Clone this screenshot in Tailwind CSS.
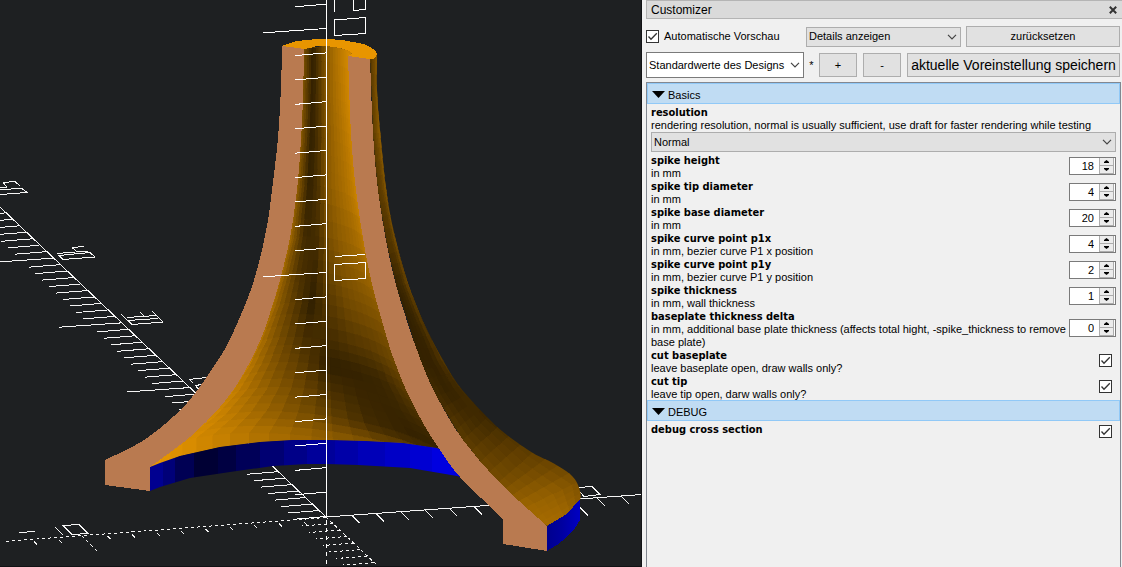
<!DOCTYPE html>
<html lang="de">

<head>
    <meta charset="UTF-8" />
    <meta name="viewport" content="width=device-width, initial-scale=1.0" />
    <title>Customizer</title>
    <script src="https://cdn.jsdelivr.net/npm/@tailwindcss/browser@4"></script>
</head>

<body class="flex h-screen overflow-hidden bg-[#f0f0f0] font-['Liberation_Sans',sans-serif] text-[11px] leading-[13px] text-black">
    <!-- shared icons -->
    <svg class="hidden">
        <symbol id="chevron" viewBox="0 0 10 6"><path d="M1 .8L5 4.8L9 .8" fill="none" stroke="#444" stroke-width="1.2" /></symbol>
        <symbol id="check" viewBox="0 0 13 13"><path d="M2.5 6.5L5 9.2L10.8 3.2" fill="none" stroke="#333" stroke-width="1.3" /></symbol>
        <symbol id="up" viewBox="0 0 5 3"><path d="M0 3V2L2.5 0L5 2V3Z" /></symbol>
        <symbol id="down" viewBox="0 0 5 3"><path d="M0 0V1L2.5 3L5 1V0Z" /></symbol>
        <symbol id="triangle" viewBox="0 0 13 7"><path d="M0 0H13L6.5 7Z" /></symbol>
    </svg>

    <main class="min-w-0 flex-1 bg-[#1e2022]">
        <svg class="block h-full w-full" viewBox="0 0 642 567" preserveAspectRatio="xMaxYMin slice" shape-rendering="crispEdges" role="img" aria-label="3D view">
            <defs>
                <clipPath id="inside">
                    <path d="M300 49L310 48L327 46L340 48L351 51L352 54L360 97L362 190L368 220L376 257L388 293L400 337L412 380L440 420L446 450L403 443L365 441L327 440L293 440L260 442L220 447L180 456L150 468L140 467L180 437L210 407L230 380L252 337L260 313L270 280L280 243L290 200L296 140L298 97Z" />
                </clipPath>
                <clipPath id="outside">
                    <path id="outside-shape" />
                </clipPath>
                <clipPath id="rim">
                    <path d="M150 467L160 463L180 456L220 447L260 442L293 440L327 440L365 441L403 443L437 448L445 452L464 478L457 476L410 468L358 465L327 464L307 464L273 466L230 472L190 478L160 487L150 491Z" />
                </clipPath>
                <linearGradient id="edge">
                    <stop offset="0" stop-color="#00008e" />
                    <stop offset=".45" stop-color="#0000a0" />
                    <stop offset="1" stop-color="#0000c4" />
                </linearGradient>
            </defs>
            <g id="axes" fill="none" stroke="#f4f4f4"></g>
            <g clip-path="url(#inside)">
                <path fill="#d08600" d="M140 40H460V500H140Z" />
                <g id="surface-in"></g>
            </g>
            <g id="surface-out" clip-path="url(#outside)"></g>
            <g id="surface-rim" clip-path="url(#rim)"></g>
            <path fill="url(#edge)" d="M547 526L567 514L580 499V520L575 528L567 537L557 545L547 551Z" />
            <path fill="#e89500" d="M282 46L290 43L297 41L312 39.500L327 39L342 40L353 42L364 44L370 47L375 50L377 54L376 57L373 59L368 59L348 56L352 54L350 51L340 48L327 46L317 46L310 48L304 49L290 47Z" />
            <path id="face-left" fill="#b97a50" />
            <path id="face-right" fill="#b97a50" />
            <g id="z-axis" fill="none" stroke="#fff"></g>
            <path fill="none" stroke="#111214" d="M0 566.500H642M641.500 0V567" />
        </svg>
    </main>

    <aside class="flex w-[480px] flex-none flex-col pl-1">
        <header class="flex h-[19px] flex-none items-center justify-between border border-r-0 border-[#b4b4b4] bg-[#dadada] pt-0.5 pr-[5px] pl-1 text-[12px]">
            <h1>Customizer</h1>
            <button aria-label="Schließen"><svg class="mb-0.5 size-2" viewBox="0 0 8 8"><path d="M.8 .8L7.200 7.200M7.200 .8L.8 7.200" stroke="#333" stroke-width="2" /></svg></button>
        </header>

        <div class="mt-[7px] flex h-[21px] flex-none items-center pr-0.5">
            <label class="flex w-40 flex-none items-center gap-[5px]">
                <span class="grid">
                    <input type="checkbox" checked class="col-start-1 row-start-1 size-[13px] appearance-none border border-[#333] bg-white" />
                    <svg class="pointer-events-none col-start-1 row-start-1 size-[13px]"><use href="#check" /></svg>
                </span>
                Automatische Vorschau
            </label>
            <span class="grid w-[155px] flex-none items-center">
                <select aria-label="Details" class="col-start-1 row-start-1 h-5 appearance-none border border-[#adadad] bg-[#e1e1e1] pl-0.5">
                    <option>Details anzeigen</option>
                </select>
                <svg class="pointer-events-none col-start-1 row-start-1 mr-1 h-1.5 w-2.5 justify-self-end"><use href="#chevron" /></svg>
            </span>
            <button class="ml-[5px] h-[21px] flex-1 border border-[#adadad] bg-[#e1e1e1]">zurücksetzen</button>
        </div>

        <div class="mt-[5px] flex h-[26px] flex-none items-center pr-0.5">
            <span class="grid w-[158px] flex-none items-center">
                <select aria-label="Voreinstellung" class="col-start-1 row-start-1 h-[26px] appearance-none border border-[#7a7a7a] bg-white pl-0.5">
                    <option>Standardwerte des Designs</option>
                </select>
                <svg class="pointer-events-none col-start-1 row-start-1 mr-1 h-1.5 w-2.5 justify-self-end"><use href="#chevron" /></svg>
            </span>
            <span class="w-[15px] flex-none text-center">*</span>
            <button class="h-6 w-[38px] flex-none border border-[#adadad] bg-[#e1e1e1]">+</button>
            <button class="ml-1.5 h-6 w-[38px] flex-none border border-[#adadad] bg-[#e1e1e1]">-</button>
            <button class="ml-1.5 h-6 min-w-0 flex-1 border border-[#adadad] bg-[#e1e1e1] text-[14px] whitespace-nowrap">aktuelle Voreinstellung speichern</button>
        </div>

        <div class="mt-1 mr-px flex-1 border border-b-0 border-[#828790] [&_b]:font-['DejaVu_Sans_Condensed','DejaVu_Sans',sans-serif]">
            <button class="flex h-[21px] w-full items-center gap-[3px] border border-[#91c9f7] bg-[#c0dcf3] pt-[3px] pl-1">
                <svg class="mb-0.5 h-[7px] w-[13px]"><use href="#triangle" /></svg>Basics
            </button>
            <div class="mt-0.5 mb-0.5 pr-1 pl-1">
                <label for="resolution" class="block"><b class="block">resolution</b>rendering resolution, normal is usually sufficient, use draft for faster rendering while testing</label>
                <span class="grid items-center">
                    <select id="resolution" class="col-start-1 row-start-1 h-5 appearance-none border border-[#adadad] bg-[#e1e1e1] pl-0.5">
                        <option>Normal</option>
                    </select>
                    <svg class="pointer-events-none col-start-1 row-start-1 mr-1 h-1.5 w-2.5 justify-self-end"><use href="#chevron" /></svg>
                </span>
            </div>
            <div id="spins"></div>
            <label class="flex justify-between pr-2 pl-1">
                <span><b class="block">cut baseplate</b>leave baseplate open, draw walls only?</span>
                <span class="mt-[5px] grid self-start">
                    <input type="checkbox" checked class="col-start-1 row-start-1 size-[13px] appearance-none border border-[#333] bg-white" />
                    <svg class="pointer-events-none col-start-1 row-start-1 size-[13px]"><use href="#check" /></svg>
                </span>
            </label>
            <label class="flex justify-between pr-2 pl-1">
                <span><b class="block">cut tip</b>leave tip open, darw walls only?</span>
                <span class="mt-[5px] grid self-start">
                    <input type="checkbox" checked class="col-start-1 row-start-1 size-[13px] appearance-none border border-[#333] bg-white" />
                    <svg class="pointer-events-none col-start-1 row-start-1 size-[13px]"><use href="#check" /></svg>
                </span>
            </label>
            <button class="-mt-px flex h-[21px] w-full items-center gap-[3px] border border-[#91c9f7] bg-[#c0dcf3] pt-[3px] pl-1">
                <svg class="mb-0.5 h-[7px] w-[13px]"><use href="#triangle" /></svg>DEBUG
            </button>
            <label class="mt-0.5 flex justify-between pr-2 pl-1">
                <b>debug cross section</b>
                <span class="mt-0.5 grid">
                    <input type="checkbox" checked class="col-start-1 row-start-1 size-[13px] appearance-none border border-[#333] bg-white" />
                    <svg class="pointer-events-none col-start-1 row-start-1 size-[13px]"><use href="#check" /></svg>
                </span>
            </label>
        </div>
    </aside>

    <script>
        // parameter rows with a spin box
        const params = [
            ['spike height', 'in mm', 18],
            ['spike tip diameter', 'in mm', 4],
            ['spike base diameter', 'in mm', 20],
            ['spike curve point p1x', 'in mm, bezier curve P1 x position', 4],
            ['spike curve point p1y', 'in mm, bezier curve P1 y position', 2],
            ['spike thickness', 'in mm, wall thickness', 1],
            ['baseplate thickness delta', 'in mm, additional base plate thickness (affects total hight, -spike_thickness to remove base plate)', 0, true]
        ];

        document.getElementById('spins').innerHTML = params.map(([name, text, value, tall], i) => `
            <div class="flex justify-between pr-1 pl-1">
                <label for="p${i}"><b class="block">${name}</b>${text}</label>
                <span class="flex h-[18px] w-[47px] flex-none border border-[#7a7a7a] bg-white ${tall ? 'mt-[9px]' : 'mt-[3px]'}">
                    <input id="p${i}" type="number" value="${value}" class="min-w-0 flex-1 pr-[5px] text-right outline-none [appearance:textfield] [&::-webkit-inner-spin-button]:appearance-none" />
                    <span class="mr-px flex w-[15px] flex-col border-x border-[#adadad] bg-[#ececec]">
                        <button aria-label="+" class="flex flex-1 items-center justify-center border-b border-[#adadad]" onclick="p${i}.stepUp()"><svg class="h-[3px] w-[5px]"><use href="#up" /></svg></button>
                        <button aria-label="-" class="flex flex-1 items-center justify-center border-b border-[#adadad]" onclick="p${i}.stepDown()"><svg class="h-[3px] w-[5px]"><use href="#down" /></svg></button>
                    </span>
                </span>
            </div>`).join('');

        const lerp = (a, b, t) => a + (b - a) * t;

        function sample(row, u) {
            const f = u * (row.length - 1);
            const k = Math.min(Math.floor(f), row.length - 2);
            return lerp(row[k], row[k + 1], f - k);
        }

        // smooth curve through the points, continuing a path
        function curve(p) {
            let d = '';
            for (let i = 0; i < p.length - 1; i++) {
                const a = p[i - 1] || p[i], b = p[i], c = p[i + 1], e = p[i + 2] || c;
                d += `C${b[0] + (c[0] - a[0]) / 6} ${b[1] + (c[1] - a[1]) / 6} ${c[0] - (e[0] - b[0]) / 6} ${c[1] - (e[1] - b[1]) / 6} ${c[0]} ${c[1]}`;
            }
            return d;
        }

        // section faces and the silhouette
        const leftOut = [[282, 46], [281, 86], [278, 138], [272, 190], [268, 220], [262, 250], [255.5, 275], [247, 300], [231, 337], [218, 360], [187, 403], [147, 438], [105, 460]];
        const leftIn = [[150, 467], [190, 437], [220, 407], [241, 378], [260, 341], [270, 313], [280, 280], [290, 238], [297, 190], [301, 140], [303, 97], [304, 49]];
        const rightOut = [[370, 59], [373, 133], [378, 190], [386.5, 243], [396, 285], [407, 321], [421, 361], [437, 397], [463, 440], [500, 483], [547, 526]];
        const rightIn = [[503, 519], [460, 477], [440, 450], [423, 423], [407, 392], [393, 357], [384, 328], [373.5, 290], [365, 250], [356, 190], [351, 133], [348, 56]];
        const silhouette = [[377, 53], [377, 90], [380, 130], [386, 188], [393, 228], [403, 267], [413, 297], [427, 330], [443, 360], [460, 387], [487, 417], [507, 435], [533, 453], [553, 463], [570, 474], [578, 485], [580, 500], [567, 514], [547, 526]];
        document.getElementById('face-left').setAttribute('d', 'M282 46' + curve(leftOut) + 'V485L150 491V467' + curve(leftIn) + 'L290 47Z');
        document.getElementById('face-right').setAttribute('d', 'M370 59' + curve(rightOut) + 'V551L503 544V519' + curve(rightIn) + 'Z');
        document.getElementById('outside-shape').setAttribute('d', 'M377 53' + curve(silhouette) + 'L490 484L450 440L400 340L375 250L366 59Z');

        // point(k, u): position on ring k, shades: one brightness row per ring
        function mesh(id, point, shades, strips, sub) {
            let out = '';
            for (let k = 0; k < shades.length - 1; k++) {
                for (let s = 0; s < sub; s++) {
                    for (let i = 0; i < strips; i++) {
                        const a = k + s / sub, b = k + (s + 1) / sub, u = i / strips, v = (i + 1) / strips;
                        const m = (u + v) / 2;
                        const c = lerp(sample(shades[k], m), sample(shades[k + 1], m), (s + .5) / sub);
                        const color = `rgb(${Math.round(238 * c)},${Math.round(154 * c)},0)`;
                        const pts = [point(a, u), point(a, v), point(b, v), point(b, u)].map(p => p.map(n => n.toFixed(1)).join()).join(' ');
                        out += `<polygon points="${pts}" fill="${color}" stroke="${color}" stroke-width=".6"/>`;
                    }
                }
            }
            document.getElementById(id).innerHTML = out;
        }

        function along(list, k) {
            const i = Math.min(Math.floor(k), list.length - 2);
            return [lerp(list[i][0], list[i + 1][0], k - i), lerp(list[i][1], list[i + 1][1], k - i)];
        }

        // inner wall
        const left = [[303, 49], [302, 97], [300, 140], [296, 190], [289, 243], [279, 280], [268, 313], [252, 350], [237, 378], [217, 407], [187, 437], [147, 467], [147, 495]];
        const right = [[350, 56], [351, 110], [354, 155], [358, 205], [366, 257], [376, 297], [387, 333], [402, 376], [416, 408], [436, 442], [465, 480], [505, 519], [505, 545]];
        const r0 = [.5, .5, .38, .2, .38, .6, .72, .8, .86, .9, .92];
        const r3 = [.65, .6, .42, .2, .33, .58, .66, .72, .78, .84, .86];
        const r6 = [.85, .74, .55, .38, .2, .36, .46, .5, .52, .55, .58];
        const r8 = [.98, .88, .7, .52, .38, .2, .22, .25, .35, .4, .42];
        const r10 = [1, .96, .86, .72, .56, .42, .27, .22, .22, .25, .3];
        const r11 = [1, .97, .92, .82, .7, .6, .54, .5, .45, .4, .4];
        const mix = (a, b, t) => a.map((n, i) => lerp(n, b[i], t));
        mesh('surface-in', (k, u) => {
            const l = along(left, k), r = along(right, k), t = u * Math.PI;
            const h = (r[0] - l[0]) / 2;
            return [(l[0] + r[0]) / 2 - Math.cos(t) * h + Math.sin(t) * h * .04, (l[1] + r[1]) / 2 - Math.cos(t) * (r[1] - l[1]) / 2 - Math.sin(t) * h * .3];
        }, [r0, mix(r0, r3, .33), mix(r0, r3, .67), r3, mix(r3, r6, .33), mix(r3, r6, .67), r6, mix(r6, r8, .5), r8, mix(r8, r10, .5), r10, r11, r11], 26, 3);

        // outer wall right of the cut
        const cut = [[370, 52], [372, 97], [373, 133], [378, 190], [387, 243], [397, 287], [407, 317], [420, 360], [437, 397], [463, 440], [498, 483], [525, 508], [545, 528]];
        const rim = [[380, 50], [380, 97], [382, 133], [388, 190], [398, 240], [410, 283], [421, 310], [446, 360], [463, 385], [490, 415], [535, 451], [582, 480], [583, 505]];
        mesh('surface-out', (k, u) => {
            const a = along(cut, k), b = along(rim, k);
            return [lerp(a[0], b[0], u), lerp(a[1], b[1], u)];
        }, [[.35, .5, .68], [.38, .5, .68], [.38, .5, .66], [.36, .42, .62], [.33, .35, .58], [.22, .28, .5], [.2, .25, .45], [.22, .22, .38], [.28, .22, .3], [.38, .3, .24], [.5, .45, .4], [.66, .62, .52], [.7, .68, .58]], 6, 4);

        // blue base ring
        const ring = [[150, '90'], [163, '78'], [175, '54'], [194, '34'], [218, '42'], [236, '58'], [260, '72'], [284, '88'], [307, '9a'], [335, 'a8'], [358, 'b8'], [385, 'c6'], [410, 'd2'], [432, 'e0'], [470, '']];
        document.getElementById('surface-rim').innerHTML = ring.slice(0, -1).map(([x, c], i) =>
            `<rect x="${x}" y="435" width="${ring[i + 1][0] - x}" height="60" fill="#0000${c}"/>`).join('');

        // axes, tick marks and their labels
        const line = (x, y, dx, dy, dash) => `<path d="M${x.toFixed(1)} ${y.toFixed(1)}l${dx} ${dy}"${dash ? ' stroke-dasharray="3 3"' : ''}/>`;
        let axes = '<path d="M0 207L326 517L642 494.500"/><path stroke-dasharray="3 3" d="M326 517.500L3 541.500M326 517L379 567"/>';
        for (let n = 1; n < 49; n++) {
            const long = n % 10 === 0;
            axes += line(326 - 6.830 * n, 517 - 6.470 * n, long ? -62 : -31, long ? 4.300 : 2.500);
        }
        for (let n = 1; n < 8; n++) axes += line(326 + 6.900 * n, 517 + 6.500 * n, -31, 2.500, true);
        for (let n = 1; n < 13; n++) {
            const d = n === 10 ? 16 : 8;
            axes += line(327 + 24.500 * n, 517 - 1.760 * n, d, d);
            axes += n === 10 ? line(82, 536, 16, 16, true) : line(328 - 24.500 * n, 520 + 1.800 * n, 3, 3);
        }
        axes += `<path d="M0 194.500L27 192.500L22 188.500L0 189.500M3 182.500L15 181.500L20 186M3 182.500L7 187L0 187.500
            M72 247.500L84 246.500M72 247.500L76 251M57 253.500L88 251M59 255.500L90 252.500L95 257L63 259.500Z
            M121 314L132 324.500L163 322L152 311M127 317.500L157 315.500M127 320.500L158 318.500M140 312L144 316
            M189 379.500L207 377.500M189 379L193 383M195 386L202 384M196 386L199 390
            M579 487.500L592 486.500L600 494.500L584 496.500L579 491
            M63 525.500L79 524.500L88 533.500L72 534.500ZM55 527L63 535M19 532.500L35 531.500"/>`;
        document.getElementById('axes').innerHTML = axes;

        let z = '<path d="M326.500 0V517"/><path stroke-dasharray="4 4" d="M326.500 520V567"/>';
        for (let n = -1; n < 21; n++) {
            const long = n % 10 === 0 && n < 20;
            z += line(326, 28.500 + 24.400 * n, long ? -63 : -31, long ? 4.300 : 2.700);
        }
        z += '<path d="M334.500 0V12M353.500 0V10.500L365.500 9.500V0M334.500 20L365.500 17.500V33.500L334.500 35.500ZM335 256.500L365 254.500M334.500 264.500L365.500 262.500V278.500L334.500 280.500Z"/>';
        document.getElementById('z-axis').innerHTML = z;
    </script>
</body>

</html>
